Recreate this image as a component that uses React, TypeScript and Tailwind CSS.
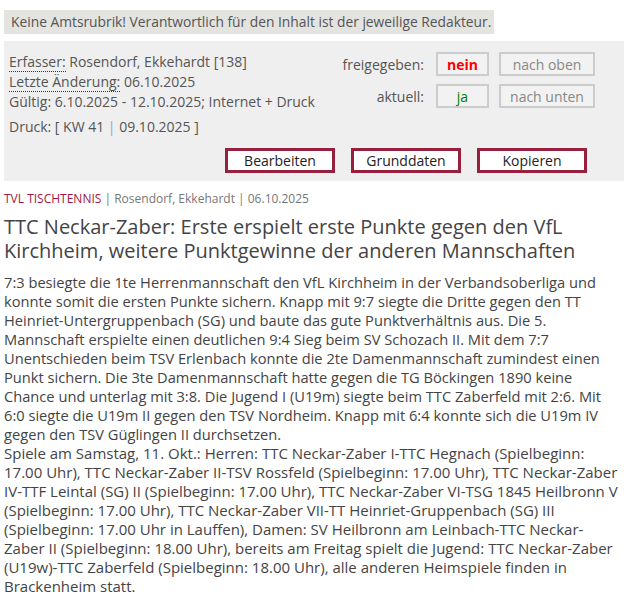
import React from 'react';

const report =
  '7:3 besiegte die 1te Herrenmannschaft den VfL Kirchheim in der Verbandsoberliga und konnte somit die ersten Punkte sichern. Knapp mit 9:7 siegte die Dritte gegen den TT Heinriet-Untergruppenbach (SG) und baute das gute Punktverhältnis aus. Die 5. Mannschaft erspielte einen deutlichen 9:4 Sieg beim SV Schozach II. Mit dem 7:7 Unentschieden beim TSV Erlenbach konnte die 2te Damenmannschaft zumindest einen Punkt sichern. Die 3te Damenmannschaft hatte gegen die TG Böckingen 1890 keine Chance und unterlag mit 3:8. Die Jugend I (U19m) siegte beim TTC Zaberfeld mit 2:6. Mit 6:0 siegte die U19m II gegen den TSV Nordheim. Knapp mit 6:4 konnte sich die U19m IV gegen den TSV Güglingen II durchsetzen.';

const fixtures =
  'Spiele am Samstag, 11. Okt.: Herren: TTC Neckar-Zaber I-TTC Hegnach (Spielbeginn: 17.00 Uhr), TTC Neckar-Zaber II-TSV Rossfeld (Spielbeginn: 17.00 Uhr), TTC Neckar-Zaber IV-TTF Leintal (SG) II (Spielbeginn: 17.00 Uhr), TTC Neckar-Zaber VI-TSG 1845 Heilbronn V (Spielbeginn: 17.00 Uhr), TTC Neckar-Zaber VII-TT Heinriet-Gruppenbach (SG) III (Spielbeginn: 17.00 Uhr in Lauffen), Damen: SV Heilbronn am Leinbach-TTC Neckar-Zaber II (Spielbeginn: 18.00 Uhr), bereits am Freitag spielt die Jugend: TTC Neckar-Zaber (U19w)-TTC Zaberfeld (Spielbeginn: 18.00 Uhr), alle anderen Heimspiele finden in Brackenheim statt.';

const StatusBox = ({ children, className = '' }: { children: React.ReactNode; className?: string }) => (
  <div className={`h-[24px] border-2 border-[#cccccc] bg-[#f2f2f2] flex items-center justify-center ${className}`}>
    {children}
  </div>
);

const ActionButton = ({ label }: { label: string }) => (
  <button className="w-[110px] h-[25px] border-[3px] border-[#98203f] bg-white text-[14px] text-[#222] leading-none">
    {label}
  </button>
);

export default function App() {
  return (
    <div className="min-h-screen bg-white text-[#555] font-['Open_Sans',sans-serif] pt-[9px] px-[4px]">
      {/* notice */}
      <div className="inline-block h-[24px] bg-[#e3e3e0] pl-[7px] pr-[3px] text-[13.8px] leading-[24px] text-[#555] whitespace-nowrap">
        Keine Amtsrubrik! Verantwortlich für den Inhalt ist der jeweilige Redakteur.
      </div>

      {/* admin panel */}
      <div className="mt-[7px] w-[620px] h-[140px] bg-[#efefef] pt-[11px] pl-[5px] pr-[29px] text-[14px]">
        <div className="flex justify-between items-start">
          <div className="leading-[20px]">
            <div>
              <abbr className="no-underline border-b border-dotted border-[#333]">Erfasser:</abbr> Rosendorf, Ekkehardt [138]
            </div>
            <div>
              <abbr className="no-underline border-b border-dotted border-[#333]">Letzte Änderung:</abbr> 06.10.2025
            </div>
            <div>Gültig: 6.10.2025 - 12.10.2025; Internet + Druck</div>
            <div className="mt-[5px]">
              Druck: [ KW 41 <span className="text-[#8ab]">|</span> 09.10.2025 ]
            </div>
          </div>
          <div className="grid grid-cols-[auto_53px_96px] content-start gap-x-[10px] gap-y-[8px] items-center text-[14px]">
            <div className="text-right mr-[2px]">freigegeben:</div>
            <StatusBox className="font-bold text-[#ff0000]">nein</StatusBox>
            <StatusBox className="text-[#888]">nach oben</StatusBox>
            <div className="text-right mr-[2px]">aktuell:</div>
            <StatusBox className="text-[#008000]">ja</StatusBox>
            <StatusBox className="text-[#888]">nach unten</StatusBox>
          </div>
        </div>
        <div className="mt-[11px] flex justify-end gap-[16px] pr-[8px]">
          <ActionButton label="Bearbeiten" />
          <ActionButton label="Grunddaten" />
          <ActionButton label="Kopieren" />
        </div>
      </div>

      {/* article */}
      <div className="mt-[10px] text-[12px] leading-[16px] text-[#777]">
        <span className="text-[#a3163f]">TVL TISCHTENNIS</span> | Rosendorf, Ekkehardt | 06.10.2025
      </div>
      <h1 className="mt-[8px] text-[20px] leading-[24px] text-[#444] font-normal">
        TTC Neckar-Zaber: Erste erspielt erste Punkte gegen den VfL Kirchheim, weitere Punktgewinne der anderen Mannschaften
      </h1>
      <div className="mt-[10px] text-[#444] pr-[2px]">
        <p className="text-[11pt] leading-[19px]">{report}</p>
        <p className="text-[15px] leading-[19px]">{fixtures}</p>
      </div>
    </div>
  );
}
